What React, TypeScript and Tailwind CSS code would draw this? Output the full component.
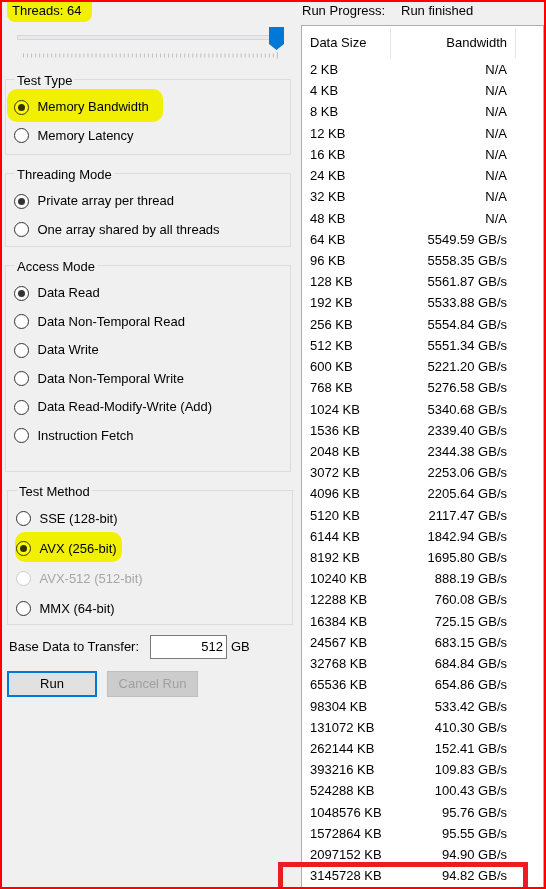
import React from "react";

const rows: [string, string][] = [
  ["2 KB", "N/A"],
  ["4 KB", "N/A"],
  ["8 KB", "N/A"],
  ["12 KB", "N/A"],
  ["16 KB", "N/A"],
  ["24 KB", "N/A"],
  ["32 KB", "N/A"],
  ["48 KB", "N/A"],
  ["64 KB", "5549.59 GB/s"],
  ["96 KB", "5558.35 GB/s"],
  ["128 KB", "5561.87 GB/s"],
  ["192 KB", "5533.88 GB/s"],
  ["256 KB", "5554.84 GB/s"],
  ["512 KB", "5551.34 GB/s"],
  ["600 KB", "5221.20 GB/s"],
  ["768 KB", "5276.58 GB/s"],
  ["1024 KB", "5340.68 GB/s"],
  ["1536 KB", "2339.40 GB/s"],
  ["2048 KB", "2344.38 GB/s"],
  ["3072 KB", "2253.06 GB/s"],
  ["4096 KB", "2205.64 GB/s"],
  ["5120 KB", "2117.47 GB/s"],
  ["6144 KB", "1842.94 GB/s"],
  ["8192 KB", "1695.80 GB/s"],
  ["10240 KB", "888.19 GB/s"],
  ["12288 KB", "760.08 GB/s"],
  ["16384 KB", "725.15 GB/s"],
  ["24567 KB", "683.15 GB/s"],
  ["32768 KB", "684.84 GB/s"],
  ["65536 KB", "654.86 GB/s"],
  ["98304 KB", "533.42 GB/s"],
  ["131072 KB", "410.30 GB/s"],
  ["262144 KB", "152.41 GB/s"],
  ["393216 KB", "109.83 GB/s"],
  ["524288 KB", "100.43 GB/s"],
  ["1048576 KB", "95.76 GB/s"],
  ["1572864 KB", "95.55 GB/s"],
  ["2097152 KB", "94.90 GB/s"],
  ["3145728 KB", "94.82 GB/s"],
];

type RadioProps = {
  label: string;
  checked?: boolean;
  disabled?: boolean;
  tall?: boolean;
};

const Radio = ({ label, checked, disabled, tall }: RadioProps) => (
  <div className={`flex items-center pl-[8px] ${tall ? "h-[30px]" : "h-[28.5px]"}`}>
    <span
      className={`flex h-[15px] w-[15px] shrink-0 items-center justify-center rounded-full border bg-white ${
        disabled ? "border-[#cccccc]" : "border-[#333333]"
      }`}
    >
      {checked && <span className="h-[7px] w-[7px] rounded-full bg-[#333333]" />}
    </span>
    <span className={`ml-[8.5px] ${disabled ? "text-[#a6a6a6]" : "text-black"}`}>{label}</span>
  </div>
);

const Group = ({
  title,
  className,
  children,
}: {
  title: string;
  className: string;
  children: React.ReactNode;
}) => (
  <fieldset className={`w-[286px] border border-[#dcdcdc] px-0 ${className}`}>
    <legend className="ml-[9px] px-[2px] pt-[4px] leading-[16px]">{title}</legend>
    {children}
  </fieldset>
);

const Ticks = () => (
  <svg width="258" height="7" className="block">
    {Array.from({ length: 64 }).map((_, i) => {
      const x = 1.5 + i * 4.03;
      const last = i === 63;
      return (
        <line
          key={i}
          x1={x}
          x2={x}
          y1={last ? 0 : 1.5}
          y2={last ? 6.5 : 5.5}
          stroke="#bdbdbd"
          strokeWidth="1"
        />
      );
    })}
  </svg>
);

export default function App() {
  return (
    <div
      className="relative flex h-[889px] w-[546px] overflow-hidden border-2 border-[#ff0000] bg-[#f0f0f0] text-[13px] leading-[16px] text-black"
      style={{ fontFamily: '"Liberation Sans", Arial, sans-serif' }}
    >
      {/* Left panel */}
      <div className="flex w-[299px] shrink-0 flex-col">
        <div className="flex h-[18px] items-center pl-[10px]">Threads: 64</div>

        {/* Thread slider */}
        <div className="relative mt-[7px] h-[31px]">
          <div className="ml-[15px] mt-[8px] h-[5px] w-[260px] border border-[#d6d6d6] bg-[#e7eaea]" />
          <div className="ml-[20px] mt-[12px]">
            <Ticks />
          </div>
          <svg width="15" height="23" className="absolute left-[267px] top-0">
            <polygon points="0,0 15,0 15,17 7.5,23 0,17" fill="#0078d7" />
          </svg>
        </div>

        <Group title="Test Type" className="ml-[3px] mt-[11px] pb-[4px]">
          <div className="pt-[4px]">
            <Radio label="Memory Bandwidth" checked />
            <Radio label="Memory Latency" />
          </div>
        </Group>

        <Group title="Threading Mode" className="ml-[3px] mt-[8px] pb-[2px]">
          <div className="pt-[4px]">
            <Radio label="Private array per thread" checked />
            <Radio label="One array shared by all threads" />
          </div>
        </Group>

        <Group title="Access Mode" className="ml-[3px] mt-[8px] pb-[21px]">
          <div className="pt-[4px]">
            <Radio label="Data Read" checked />
            <Radio label="Data Non-Temporal Read" />
            <Radio label="Data Write" />
            <Radio label="Data Non-Temporal Write" />
            <Radio label="Data Read-Modify-Write (Add)" />
            <Radio label="Instruction Fetch" />
          </div>
        </Group>

        <Group title="Test Method" className="ml-[5px] mt-[8px] pb-0">
          <div className="pt-[3.5px]">
            <Radio label="SSE (128-bit)" tall />
            <Radio label="AVX (256-bit)" checked tall />
            <Radio label="AVX-512 (512-bit)" disabled tall />
            <Radio label="MMX (64-bit)" tall />
          </div>
        </Group>

        <div className="ml-[7px] mt-[10px] flex h-[24px] items-center">
          <span className="w-[141px]">Base Data to Transfer:</span>
          <div className="flex h-[24px] w-[77px] items-center justify-end border border-[#7a7a7a] bg-white pr-[3px]">
            512
          </div>
          <span className="ml-[4px]">GB</span>
        </div>

        <div className="ml-[5px] mt-[12px] flex">
          <button className="flex h-[26px] w-[90px] items-center justify-center border-2 border-[#0078d7] bg-[#e1e1e1]">
            Run
          </button>
          <button
            disabled
            className="ml-[10px] flex h-[26px] w-[91px] items-center justify-center border border-[#bfbfbf] bg-[#cccccc] text-[#a0a0a0]"
          >
            Cancel Run
          </button>
        </div>
      </div>

      {/* Right panel */}
      <div className="flex min-w-0 flex-1 flex-col">
        <div className="flex h-[18px] items-center pl-[1px]">
          <span className="w-[99px]">Run Progress:</span>
          <span>Run finished</span>
        </div>

        <div className="mt-[5px] flex-1 border border-b-0 border-[#adadad] bg-white">
          <div className="flex h-[33.4px] items-center pt-[1px]">
            <span className="w-[88px] pl-[8px]">Data Size</span>
            <span className="h-[30px] w-px bg-[#e5e5e5]" />
            <span className="w-[124px] pr-[8px] text-right">Bandwidth</span>
            <span className="h-[30px] w-px bg-[#e5e5e5]" />
          </div>
          {rows.map(([size, bw]) => (
            <div key={size} className="flex h-[21.23px] items-center">
              <span className="w-[88px] pl-[8px]">{size}</span>
              <span className="w-[125px] pr-[8px] text-right">{bw}</span>
            </div>
          ))}
        </div>
      </div>

      {/* Highlighter marks */}
      <div className="pointer-events-none absolute left-[5px] top-[-2px] h-[22px] w-[85px] rounded-b-[8px] bg-[#ffff00] mix-blend-multiply" />
      <div className="pointer-events-none absolute left-[5px] top-[87px] h-[33px] w-[156px] rounded-[10px] bg-[#ffff00] mix-blend-multiply" />
      <div className="pointer-events-none absolute left-[13px] top-[530px] h-[30px] w-[107px] rounded-[10px] bg-[#ffff00] mix-blend-multiply" />

      {/* Red annotation box */}
      <div className="pointer-events-none absolute left-[276px] top-[860px] h-[32px] w-[250px] border-[5px] border-[#ed1c24]" />
    </div>
  );
}
